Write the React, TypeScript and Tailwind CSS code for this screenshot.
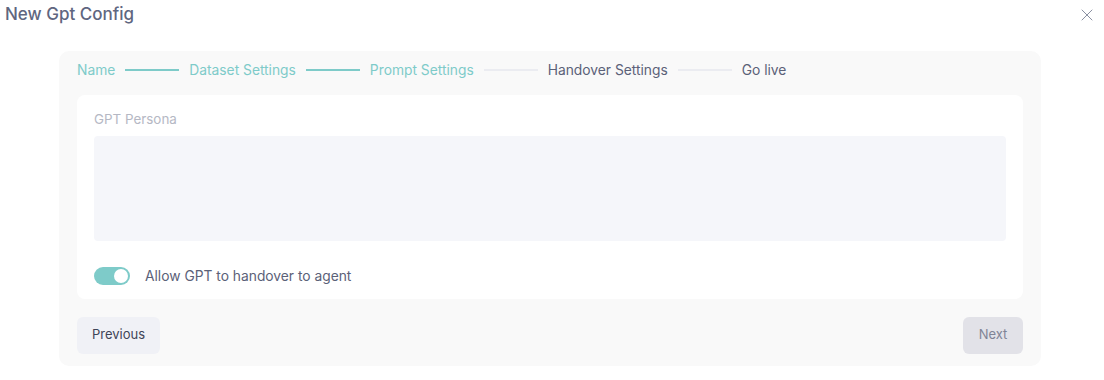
import { X } from 'lucide-react';

const steps = [
  { label: 'Name', done: true },
  { label: 'Dataset Settings', done: true },
  { label: 'Prompt Settings', done: true },
  { label: 'Handover Settings', done: false },
  { label: 'Go live', done: false },
];

export default function App() {
  return (
    <div className="w-[1104px] h-[380px] bg-white font-['Inter',sans-serif] text-[#5b6178]">
      {/* header */}
      <div className="flex items-center justify-between pl-[5px] pr-[7px] h-[30px]">
        <h1 className="text-[17px] font-medium text-[#5f6680]">New Gpt Config</h1>
        <X className="w-[20px] h-[20px] text-[#8a90a2]" strokeWidth={1.2} />
      </div>

      <div className="ml-[59px] mt-[21px] w-[982px] rounded-[10px] bg-[#f9f9f9] px-[18px] pt-[9px] pb-[12px]">
        {/* steps */}
        <div className="flex items-center h-[20px] text-[13.8px]">
          {steps.map((s, i) => (
            <div key={s.label} className="flex items-center">
              {i > 0 && (
                <div
                  className={
                    'mx-[10px] h-[2px] w-[54px] ' + (steps[i].done ? 'bg-[#7ecbc9]' : 'bg-[#ebecf1]')
                  }
                />
              )}
              <span className={s.done ? 'text-[#7ecbc9]' : 'text-[#5b6178]'}>{s.label}</span>
            </div>
          ))}
        </div>

        {/* card */}
        <div className="mt-[15px] rounded-[8px] bg-white px-[17px] pt-[15px] pb-[12px]">
          <div className="text-[13.4px] leading-[18px] text-[#b5b8c4]">GPT Persona</div>
          <div className="mt-[8px] h-[105px] rounded-[4px] bg-[#f5f6fa]" />
          <div className="mt-[25px] flex items-center gap-[15px]">
            <div className="relative w-[36px] h-[18px] rounded-full bg-[#7ecbc9]">
              <div className="absolute right-[2px] top-[2px] w-[14px] h-[14px] rounded-full bg-white" />
            </div>
            <span className="text-[13.8px] text-[#5b6178]">Allow GPT to handover to agent</span>
          </div>
        </div>

        {/* footer */}
        <div className="mt-[18px] flex justify-between">
          <button className="h-[37px] w-[83px] rounded-[6px] bg-[#f0f1f6] text-[13px] text-[#3f4457]">
            Previous
          </button>
          <button className="h-[37px] w-[60px] rounded-[6px] bg-[#e2e2e8] text-[13px] text-[#7f8496]">
            Next
          </button>
        </div>
      </div>
    </div>
  );
}
